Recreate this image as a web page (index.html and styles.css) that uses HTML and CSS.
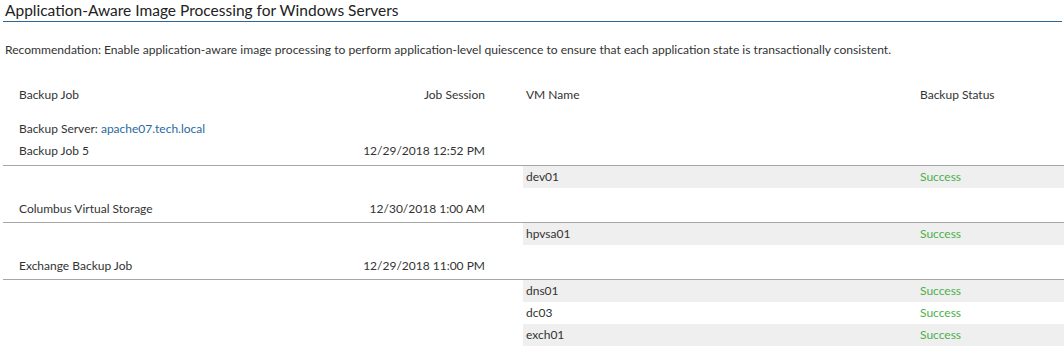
FILE: index.html
```html
<!DOCTYPE html>
<html>
<head>
<meta charset="utf-8">
<link rel="stylesheet" href="styles.css">
</head>
<body>
<div class="report">
  <h1 class="title">Application-Aware Image Processing for Windows Servers</h1>
  <p class="rec">Recommendation: Enable application-aware image processing to perform application-level quiescence to ensure that each application state is transactionally consistent.</p>
  <div class="table">
    <div class="row head">
      <div class="left"><span class="job">Backup Job</span><span class="date">Job Session</span></div>
      <div class="gap"></div>
      <div class="right"><span class="vm">VM Name</span><span class="status">Backup Status</span></div>
    </div>
    <div class="row server">
      <span class="job">Backup Server: <span class="link">apache07.tech.local</span></span>
    </div>

    <div class="row jobrow first">
      <div class="left"><span class="job">Backup Job 5</span><span class="date">12/29/2018 12:52 PM</span></div>
    </div>
    <div class="row vmrow">
      <div class="left"></div><div class="gap"></div>
      <div class="right shade"><span class="vm">dev01</span><span class="status ok">Success</span></div>
    </div>

    <div class="row jobrow">
      <div class="left"><span class="job">Columbus Virtual Storage</span><span class="date">12/30/2018 1:00 AM</span></div>
    </div>
    <div class="row vmrow">
      <div class="left"></div><div class="gap"></div>
      <div class="right shade"><span class="vm">hpvsa01</span><span class="status ok">Success</span></div>
    </div>

    <div class="row jobrow">
      <div class="left"><span class="job">Exchange Backup Job</span><span class="date">12/29/2018 11:00 PM</span></div>
    </div>
    <div class="row vmrow">
      <div class="left"></div><div class="gap"></div>
      <div class="right shade"><span class="vm">dns01</span><span class="status ok">Success</span></div>
    </div>
    <div class="row vmrow">
      <div class="left"></div><div class="gap"></div>
      <div class="right"><span class="vm">dc03</span><span class="status ok">Success</span></div>
    </div>
    <div class="row vmrow">
      <div class="left"></div><div class="gap"></div>
      <div class="right shade"><span class="vm">exch01</span><span class="status ok">Success</span></div>
    </div>
  </div>
</div>
</body>
</html>
```

FILE: styles.css
```css
html, body {
  margin: 0;
  padding: 0;
  background: #ffffff;
}
body {
  font-family: "Lato", "Liberation Sans", sans-serif;
  font-size: 12px;
  color: #333333;
}
.report {
  width: 1064px;
}
.title {
  margin: 0 2px 0 3px;
  padding-left: 2px;
  font-size: 15.5px;
  font-weight: normal;
  line-height: 21px;
  height: 21px;
  color: #222222;
  border-bottom: 1px solid #2f6592;
}
.rec {
  margin: 20px 0 0 5px;
  font-size: 12.1px;
  line-height: 16px;
}
.table {
  margin: 29px 0 0 3px;
  width: 1061px;
}
.row {
  display: flex;
  line-height: 16px;
}
.left {
  width: 487px;
  display: flex;
  justify-content: space-between;
  flex: none;
}
.gap {
  width: 33px;
  flex: none;
}
.right {
  flex: 1;
  display: flex;
}
.job {
  padding-left: 16px;
}
.date {
  padding-right: 5px;
}
.vm {
  width: 394px;
  padding-left: 3px;
  flex: none;
}
.status {
  padding-left: 0;
}
.server {
  margin-top: 18px;
}
.link {
  color: #2a6a9b;
}
.jobrow {
  width: 1061px;
  padding: 13px 0 5px;
  border-bottom: 1px solid #a6a6a6;
}
.jobrow.first {
  padding-top: 6px;
  padding-bottom: 6px;
}
.vmrow {
  height: 22px;
  line-height: 21px;
}
.shade {
  background: #efefef;
}
.ok {
  color: #4caf4c;
}
```
